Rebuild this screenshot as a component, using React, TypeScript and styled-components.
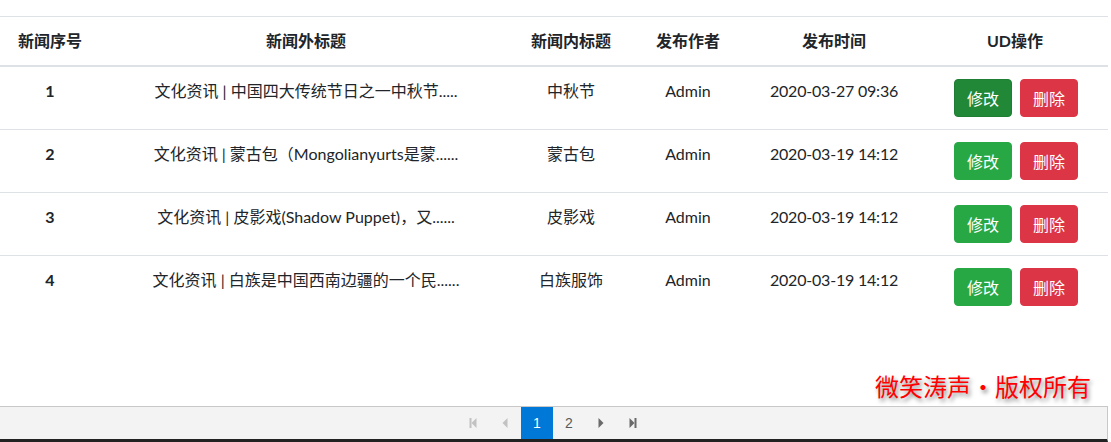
import React from "react";
import styled, { createGlobalStyle } from "styled-components";

const GlobalStyle = createGlobalStyle`
  html, body { margin: 0; padding: 0; background: #fff; overflow: hidden; }
  body {
    font-family: Lato, "Noto Sans CJK SC", sans-serif;
    font-size: 16px;
    line-height: 1.5;
    color: #212529;
  }
  * { box-sizing: border-box; }
`;

const Page = styled.div`
  position: relative;
  width: 1108px;
  height: 442px;
  display: flex;
  flex-direction: column;
  padding-top: 16px;
`;

const Table = styled.table`
  width: 100%;
  border-collapse: collapse;
  table-layout: fixed;
`;

const HeadCell = styled.th`
  padding: 12px 0;
  text-align: center;
  font-weight: 700;
  border-top: 1px solid #dee2e6;
  border-bottom: 2px solid #dee2e6;
  vertical-align: bottom;
`;

const Cell = styled.td<{ $bold?: boolean }>`
  padding: 12px 0;
  text-align: center;
  vertical-align: top;
  border-top: 1px solid #dee2e6;
  font-weight: ${(p) => (p.$bold ? 700 : 400)};
  white-space: nowrap;
`;

const DateText = styled.span`
  letter-spacing: -0.2px;
`;

const ButtonGroup = styled.div`
  display: flex;
  justify-content: center;
  gap: 8px;
  padding-left: 2px;
`;

const Button = styled.button<{ $variant: "edit" | "editActive" | "del" }>`
  min-width: 58px;
  height: 38px;
  padding: 6px 12px;
  font-family: "Noto Sans CJK SC", sans-serif;
  font-size: 16px;
  line-height: 24px;
  color: #fff;
  border-radius: 4px;
  border: 1px solid
    ${(p) => (p.$variant === "del" ? "#dc3545" : p.$variant === "editActive" ? "#1e7e34" : "#28a745")};
  background: ${(p) => (p.$variant === "del" ? "#dc3545" : p.$variant === "editActive" ? "#218838" : "#28a745")};
  cursor: pointer;
`;

const Spacer = styled.div`
  flex: 1;
`;

const Watermark = styled.div`
  position: absolute;
  right: 17px;
  bottom: 44px;
  font-family: "Noto Sans CJK SC", sans-serif;
  font-size: 24px;
  line-height: 24px;
  color: #f00;
  text-shadow: 2px 3px 4px rgba(0, 0, 0, 0.45);
`;

const Pager = styled.div`
  height: 36px;
  border-top: 1px solid #c8c8c8;
  border-right: 1px solid #c8c8c8;
  border-bottom: 3px solid #222;
  background: #f3f3f3;
  display: flex;
  justify-content: center;
  padding-right: 1px;
`;

const PageItem = styled.div<{ $active?: boolean }>`
  width: 32px;
  height: 32px;
  display: flex;
  align-items: center;
  justify-content: center;
  font-family: "Liberation Sans", Arial, sans-serif;
  font-size: 14px;
  color: ${(p) => (p.$active ? "#fff" : "#5a5a5a")};
  background: ${(p) => (p.$active ? "#0078d7" : "transparent")};
`;

type IconKind = "first" | "prev" | "next" | "last";

const PagerIcon = ({ kind, disabled }: { kind: IconKind; disabled?: boolean }) => {
  const c = disabled ? "#c2c2c2" : "#6a6a6a";
  return (
    <svg width="10" height="12" viewBox="0 0 10 12">
      {kind === "first" && (
        <>
          <rect x="1.5" y="1" width="2" height="10" fill={c} />
          <polygon points="8.5,1 3.5,6 8.5,11" fill={c} />
        </>
      )}
      {kind === "prev" && <polygon points="7.5,1 2.5,6 7.5,11" fill={c} />}
      {kind === "next" && <polygon points="2.5,1 7.5,6 2.5,11" fill={c} />}
      {kind === "last" && (
        <>
          <polygon points="1.5,1 6.5,6 1.5,11" fill={c} />
          <rect x="6.5" y="1" width="2" height="10" fill={c} />
        </>
      )}
    </svg>
  );
};

const rows = [
  { id: 1, title: "文化资讯 | 中国四大传统节日之一中秋节.....", inner: "中秋节", time: "2020-03-27 09:36" },
  { id: 2, title: "文化资讯 | 蒙古包（Mongolianyurts是蒙......", inner: "蒙古包", time: "2020-03-19 14:12" },
  { id: 3, title: "文化资讯 | 皮影戏(Shadow Puppet)，又......", inner: "皮影戏", time: "2020-03-19 14:12" },
  { id: 4, title: "文化资讯 | 白族是中国西南边疆的一个民......", inner: "白族服饰", time: "2020-03-19 14:12" },
];

export default function App() {
  return (
    <>
      <GlobalStyle />
      <Page>
        <Table>
          <colgroup>
            <col style={{ width: 100 }} />
            <col style={{ width: 412 }} />
            <col style={{ width: 118 }} />
            <col style={{ width: 116 }} />
            <col style={{ width: 176 }} />
            <col />
          </colgroup>
          <thead>
            <tr>
              <HeadCell>新闻序号</HeadCell>
              <HeadCell>新闻外标题</HeadCell>
              <HeadCell>新闻内标题</HeadCell>
              <HeadCell>发布作者</HeadCell>
              <HeadCell>发布时间</HeadCell>
              <HeadCell>UD操作</HeadCell>
            </tr>
          </thead>
          <tbody>
            {rows.map((r, i) => (
              <tr key={r.id}>
                <Cell $bold>{r.id}</Cell>
                <Cell>{r.title}</Cell>
                <Cell>{r.inner}</Cell>
                <Cell>Admin</Cell>
                <Cell>
                  <DateText>{r.time}</DateText>
                </Cell>
                <Cell>
                  <ButtonGroup>
                    <Button $variant={i === 0 ? "editActive" : "edit"}>修改</Button>
                    <Button $variant="del">删除</Button>
                  </ButtonGroup>
                </Cell>
              </tr>
            ))}
          </tbody>
        </Table>
        <Spacer />
        <Watermark>微笑涛声·版权所有</Watermark>
        <Pager>
          <PageItem><PagerIcon kind="first" disabled /></PageItem>
          <PageItem><PagerIcon kind="prev" disabled /></PageItem>
          <PageItem $active>1</PageItem>
          <PageItem>2</PageItem>
          <PageItem><PagerIcon kind="next" /></PageItem>
          <PageItem><PagerIcon kind="last" /></PageItem>
        </Pager>
      </Page>
    </>
  );
}
